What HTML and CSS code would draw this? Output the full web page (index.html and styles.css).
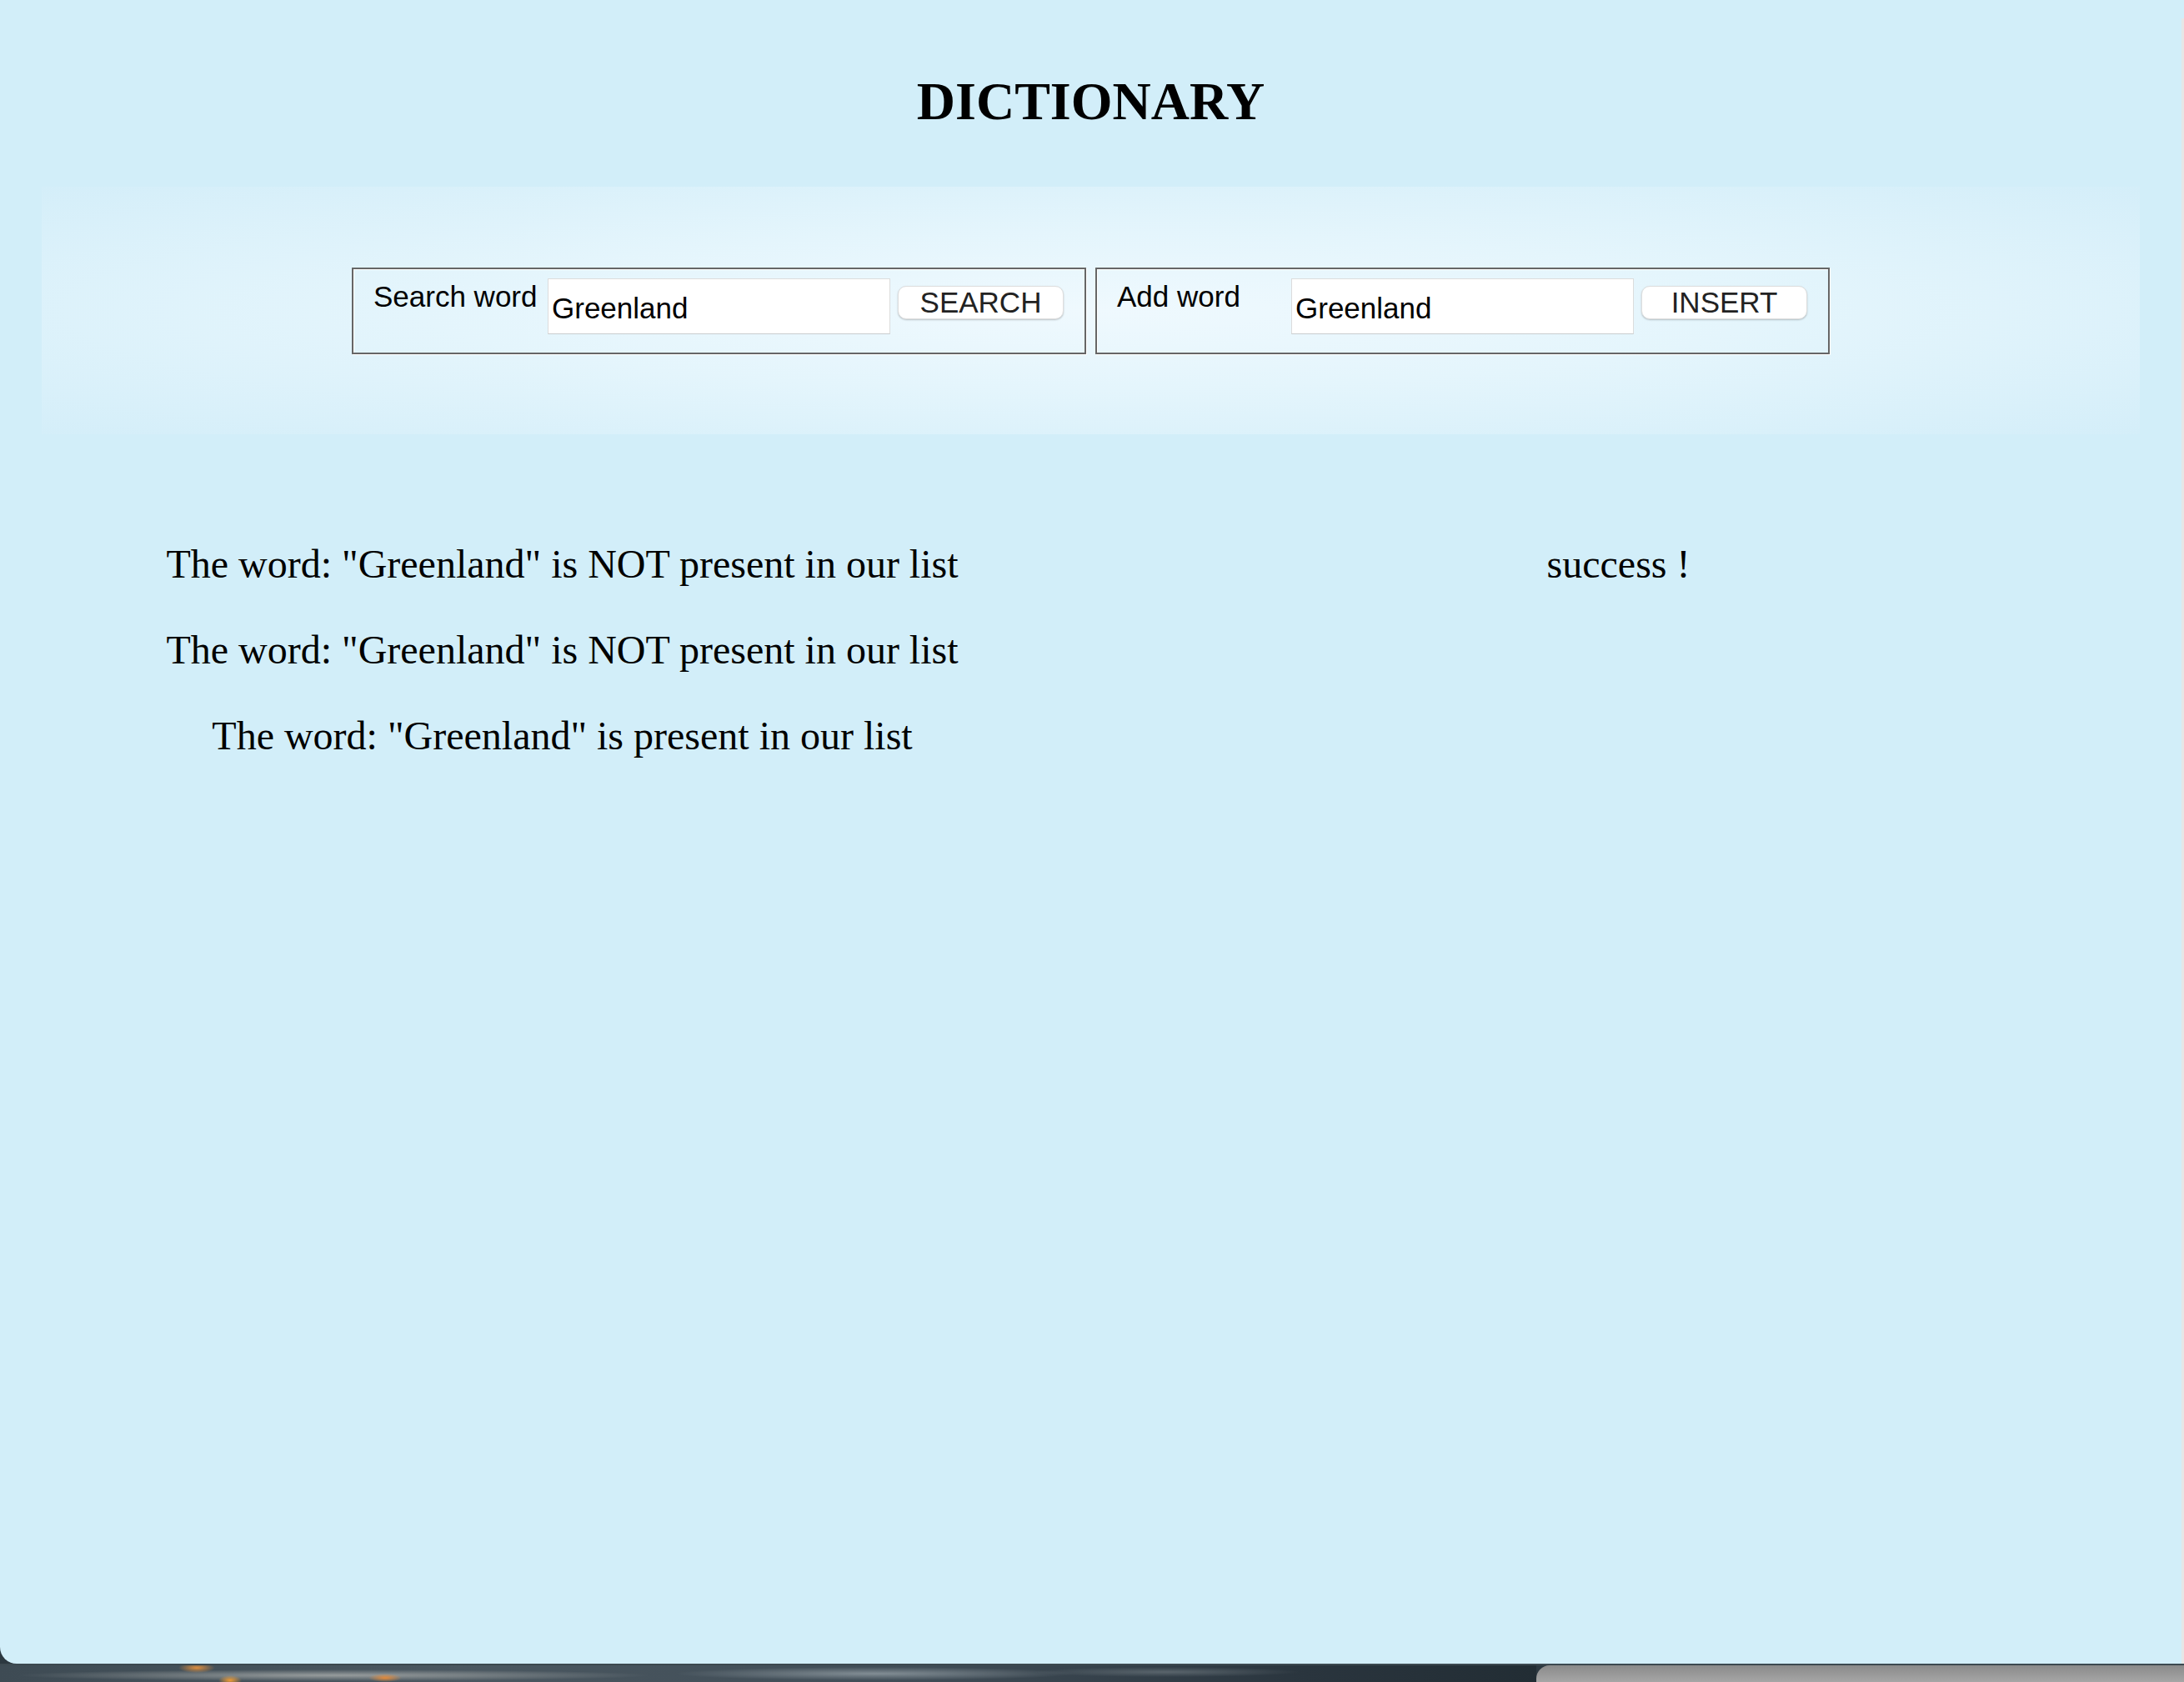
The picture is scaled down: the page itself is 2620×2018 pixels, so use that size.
FILE: index.html
```
<!DOCTYPE html>
<html lang="en">
<head>
<meta charset="utf-8">
<title>Dictionary</title>
<link rel="stylesheet" href="styles.css">
</head>
<body>
<div class="screen">
  <div class="window">
    <div class="page">
      <h1 class="title">DICTIONARY</h1>
      <div class="panel">
        <fieldset class="box">
          <div class="box-row">
            <label class="box-label">Search word</label>
            <input class="box-input" type="text" value="Greenland">
            <button class="box-btn" type="button">SEARCH</button>
          </div>
        </fieldset>
        <fieldset class="box">
          <div class="box-row">
            <label class="box-label">Add word</label>
            <input class="box-input" type="text" value="Greenland">
            <button class="box-btn" type="button">INSERT</button>
          </div>
        </fieldset>
      </div>
      <div class="results">
        <div class="col">
          <p class="msg">The word: "Greenland" is NOT present in our list</p>
          <p class="msg">The word: "Greenland" is NOT present in our list</p>
          <p class="msg">The word: "Greenland" is present in our list</p>
        </div>
        <div class="col">
          <p class="msg">success !</p>
        </div>
      </div>
    </div>
    <div class="edge"></div>
  </div>
  <div class="desktop">
    <div class="desk-image"></div>
    <div class="desk-gray"></div>
  </div>
</div>
</body>
</html>
```

FILE: styles.css
```
html, body {
  margin: 0;
  padding: 0;
}

body {
  width: 2620px;
  height: 2018px;
  overflow: hidden;
  background: #2c3840;
}

.screen {
  display: flex;
  flex-direction: column;
  width: 2620px;
  height: 2018px;
  background: #2c3840;
}

.window {
  display: flex;
  width: 2620px;
  height: 1996px;
  background: #d2eef9;
  border-bottom-left-radius: 20px;
  overflow: hidden;
}

.page {
  flex: 1;
  padding-top: 85px;
  font-family: "Liberation Serif", "Times New Roman", serif;
  color: #000;
}

.edge {
  width: 3px;
  background: linear-gradient(to bottom, #d2eef9 22px, #e6e6e6 22px);
}

.title {
  margin: 0;
  font-size: 64px;
  line-height: 73px;
  font-weight: bold;
  text-align: center;
}

.panel {
  margin: 66px 50px 0;
  height: 297px;
  display: flex;
  align-items: center;
  justify-content: center;
  gap: 11px;
  background: radial-gradient(ellipse farthest-corner at 50% 50%, #eff9fe 0%, #e4f5fc 45%, #d4eef9 100%);
}

.box {
  box-sizing: border-box;
  width: 881px;
  height: 104px;
  margin: 0;
  padding: 11px 24px 20px 24px;
  min-inline-size: 0;
  border: 2px solid #666666;
  box-shadow: inset 1px 1px 0 #ffffff, 1px 1px 0 #ffffff;
}

.box-row {
  display: flex;
  align-items: flex-start;
  font-family: "Liberation Sans", Arial, sans-serif;
  font-size: 35px;
}

.box-label {
  width: 209px;
  flex: 0 0 209px;
  margin-top: 2px;
  line-height: 40px;
  color: #000;
  white-space: nowrap;
}

.box-input {
  box-sizing: border-box;
  width: 411px;
  height: 67px;
  margin: 0;
  padding: 6px 4px 0;
  border: 1px solid #dcdcdc;
  border-bottom-color: #c9ccce;
  background: #ffffff;
  font-family: "Liberation Sans", Arial, sans-serif;
  font-size: 35px;
  color: #000;
  outline: none;
}

.box-btn {
  box-sizing: border-box;
  width: 199px;
  height: 40px;
  margin: 9px 0 0 9px;
  padding: 0;
  border: 1px solid #dedede;
  border-radius: 10px;
  background: #ffffff;
  box-shadow: 0 1px 2px rgba(0, 0, 0, 0.22);
  font-family: "Liberation Sans", Arial, sans-serif;
  font-size: 35px;
  line-height: 38px;
  color: #222;
}

.results {
  margin: 80px 42px 0 41px;
  display: grid;
  grid-template-columns: 1fr 1fr;
}

.col {
  text-align: center;
}

.msg {
  margin: 48px 0;
  font-size: 48px;
  line-height: normal;
}

.desktop {
  display: flex;
  height: 22px;
  border-top: 2px solid #3c4950;
  box-sizing: border-box;
}

.desk-image {
  flex: 0 0 1843px;
  background:
    radial-gradient(ellipse 22px 6px at 236px 3px, rgba(240, 150, 60, 0.9), rgba(240, 150, 60, 0) 100%),
    radial-gradient(ellipse 14px 6px at 276px 18px, rgba(250, 160, 50, 0.95), rgba(250, 160, 50, 0) 100%),
    radial-gradient(ellipse 20px 5px at 462px 15px, rgba(240, 140, 50, 0.9), rgba(240, 140, 50, 0) 100%),
    radial-gradient(ellipse 380px 7px at 400px 12px, rgba(205, 205, 200, 0.6), rgba(205, 205, 200, 0) 100%),
    radial-gradient(ellipse 240px 8px at 1050px 10px, rgba(185, 195, 200, 0.55), rgba(185, 195, 200, 0) 100%),
    radial-gradient(ellipse 160px 6px at 1400px 8px, rgba(150, 160, 165, 0.4), rgba(150, 160, 165, 0) 100%),
    linear-gradient(to right, #3e4b54 0%, #4a5760 30%, #3f4c56 60%, #2a353e 85%, #222d34 100%);
}

.desk-gray {
  flex: 1;
  border-top-left-radius: 16px;
  background: linear-gradient(to bottom, #8a8a8a, #a6a6a6);
}
```
